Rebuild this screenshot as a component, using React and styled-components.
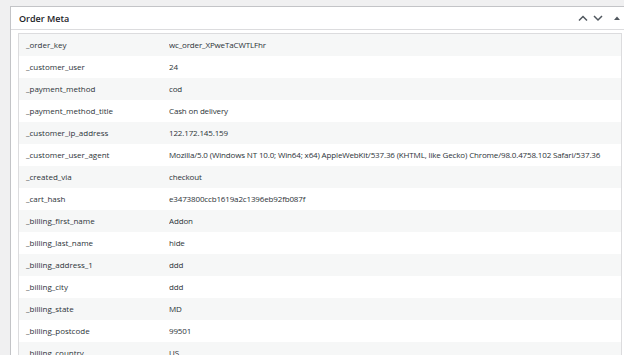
import React from "react";
import styled, { createGlobalStyle } from "styled-components";

const rows = [
  ["_order_key", "wc_order_XPweTaCWTLFhr"],
  ["_customer_user", "24"],
  ["_payment_method", "cod"],
  ["_payment_method_title", "Cash on delivery"],
  ["_customer_ip_address", "122.172.145.159"],
  [
    "_customer_user_agent",
    "Mozilla/5.0 (Windows NT 10.0; Win64; x64) AppleWebKit/537.36 (KHTML, like Gecko) Chrome/98.0.4758.102 Safari/537.36",
  ],
  ["_created_via", "checkout"],
  ["_cart_hash", "e3473800ccb1619a2c1396eb92fb087f"],
  ["_billing_first_name", "Addon"],
  ["_billing_last_name", "hide"],
  ["_billing_address_1", "ddd"],
  ["_billing_city", "ddd"],
  ["_billing_state", "MD"],
  ["_billing_postcode", "99501"],
  ["_billing_country", "US"],
];

export default function App() {
  return (
    <>
      <Global />
      <Page>
        <Panel>
          <Header>
            <Title>Order Meta</Title>
            <Actions>
              <svg width="12" height="8" viewBox="0 0 12 8">
                <path d="M2 6.5 L6 2.5 L10 6.5" fill="none" stroke="#50575e" strokeWidth="1.5" />
              </svg>
              <svg width="12" height="8" viewBox="0 0 12 8">
                <path d="M2 2 L6 6 L10 2" fill="none" stroke="#50575e" strokeWidth="1.5" />
              </svg>
              <Toggle>
                <svg width="10" height="8" viewBox="0 0 10 8">
                  <path d="M2 6 L5 2.5 L8 6 Z" fill="#50575e" />
                </svg>
              </Toggle>
            </Actions>
          </Header>
          <Body>
            <Table>
              <tbody>
                {rows.map(([k, v], i) => (
                  <Row key={k} $odd={i % 2 === 0}>
                    <KeyCell>{k}</KeyCell>
                    <ValueCell>{v}</ValueCell>
                  </Row>
                ))}
              </tbody>
            </Table>
          </Body>
        </Panel>
      </Page>
    </>
  );
}

const Global = createGlobalStyle`
  html, body {
    margin: 0;
    padding: 0;
    background: #f0f0f1;
    overflow: hidden;
  }
  body {
    font-family: "Open Sans", "Noto Sans", sans-serif;
    color: #2c3338;
  }
`;

const Page = styled.div`
  width: 624px;
  height: 355px;
  padding: 6px 0 0 10px;
  box-sizing: border-box;
  overflow: hidden;
`;

const Panel = styled.div`
  width: 620px;
  background: #fff;
  border: 1px solid #c3c4c7;
  box-sizing: border-box;
`;

const Header = styled.div`
  height: 22px;
  display: flex;
  align-items: center;
  justify-content: space-between;
  padding: 0 0 0 8px;
  border-bottom: 1px solid #dcdcde;
`;

const Title = styled.h2`
  margin: 0;
  font-size: 9px;
  font-weight: 600;
  color: #1d2327;
`;

const Actions = styled.div`
  display: flex;
  align-items: center;
  gap: 3px;
  margin-right: 7px;
  svg {
    display: block;
  }
`;

const Toggle = styled.span`
  margin-left: 5px;
`;

const Body = styled.div`
  padding: 3px 0 0 7px;
`;

const Table = styled.table`
  width: 604px;
  table-layout: fixed;
  border: 1px solid #dcdcde;
  border-collapse: collapse;
  font-size: 8px;
  color: #2c3338;
`;

const Row = styled.tr`
  height: 22px;
  background: ${(p) => (p.$odd ? "#f6f7f7" : "#fff")};
`;

const KeyCell = styled.td`
  width: 143px;
  padding: 0 0 0 7px;
  white-space: nowrap;
`;

const ValueCell = styled.td`
  padding: 0;
  white-space: nowrap;
  overflow: hidden;
  letter-spacing: -0.15px;
`;
